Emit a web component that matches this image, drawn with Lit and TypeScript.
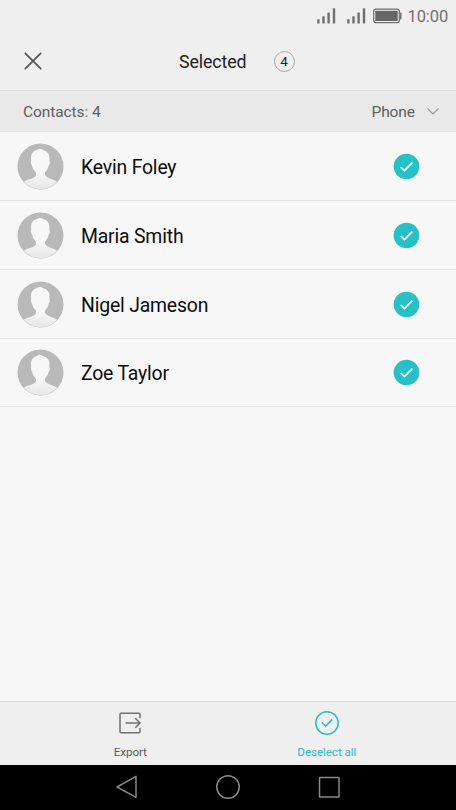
import { LitElement, html, css } from "lit";
import { customElement, property } from "lit/decorators.js";

const signal = () => html`<svg class="signal" width="20" height="18" viewBox="0 0 20 18">
  <g fill="#707070"><rect x="0.2" y="12.2" width="2.4" height="4.3" rx=".6"/><rect x="5.3" y="9.3" width="2.4" height="7.200" rx=".6"/>
  <rect x="10.4" y="5.500" width="2.4" height="11" rx=".6"/><rect x="15.8" y="1.2" width="2.4" height="15.3" rx=".6"/></g></svg>`;

@customElement("contact-row")
export class ContactRow extends LitElement {
  @property() name = "";
  static styles = css`
    :host { display: flex; box-sizing: border-box; height: 69px; align-items: center; padding: 0 36px 0 17px; border-bottom: 1px solid #e4e4e4; }
    :host(:last-child) { height: 68px; }
    .avatar { flex: none; }
    .name { flex: 1; margin-left: 17px; font-size: 19.400px; letter-spacing: -.18px; line-height: 24px; color: #0c0c0c; padding-top: 3px; }
    .check { flex: none; }
  `;
  render() {
    return html`<svg class="avatar" width="47" height="47" viewBox="0 0 47 47">
        <defs>
          <linearGradient id="body" x1="0" y1="0" x2="0" y2="1"><stop offset=".6" stop-color="#f7f7f7"/><stop offset="1" stop-color="#e6e6e6"/></linearGradient>
          <clipPath id="round"><circle cx="23.5" cy="23.5" r="22.600"/></clipPath>
        </defs>
        <circle cx="23.5" cy="23.5" r="23" fill="#b9b9b9"/>
        <path clip-path="url(#round)" fill="url(#body)" d="M22.200 5.800C24 5.800 25.500 6.600 26.500 7.300C30.300 8.300 32.400 11 32.500 14.500L32.400 18.500C33.300 19 32.900 21.500 31.700 22.500C31.200 25.500 30 27.300 28.500 28.700C27.600 30 27.600 31.500 28.600 32.800C30.300 35 36 36.300 41.500 39.500V47H6V39.500C9 36.300 16 36 18.300 33.500C19.300 32 19.200 30 18.400 28.700C16.500 27.300 15.500 25 15 22.500C13.800 21 13.500 19 14.200 17.500C13.500 12.500 14.800 8.300 19.800 7.100Z"/>
      </svg>
      <span class="name">${this.name}</span>
      <svg class="check" width="27" height="27" viewBox="0 0 27 27"><circle cx="13.500" cy="13.500" r="12.800" fill="#27c0c7"/>
        <path d="M7.700 14L11.400 17.500L19.400 9.600" fill="none" stroke="#fff" stroke-width="1.700"/></svg>`;
  }
}

@customElement("app-root")
export class AppRoot extends LitElement {
  names = ["Kevin Foley", "Maria Smith", "Nigel Jameson", "Zoe Taylor"];
  static styles = css`
    :host { display: flex; flex-direction: column; width: 456px; height: 810px; background: #f7f7f7; font-family: Roboto, "Liberation Sans", sans-serif; overflow: hidden; }
    svg { display: block; flex: none; }
    .status { height: 32px; flex: none; display: flex; align-items: center; justify-content: flex-end; background: #efefef; padding-right: 8px; box-sizing: border-box; }
    .signal { margin-right: 10px; }
    .battery { margin-left: -4px; margin-right: 6px; }
    .time { font-size: 16.500px; line-height: 20px; color: #707070; width: 40.500px; white-space: nowrap; letter-spacing: -.1px; padding-top: 1px; }
    .header { height: 59px; flex: none; box-sizing: border-box; display: flex; align-items: center; background: #efefef; border-bottom: 1px solid #dedede; padding: 0 0 0 23px; }
    .title { margin-left: 136px; width: 68px; font-size: 17.800px; letter-spacing: -.12px; line-height: 22px; color: #222; white-space: nowrap; padding-top: 1px; }
    .count { margin-left: 26.500px; width: 21px; height: 21px; box-sizing: border-box; border: 1px solid #aaa; border-radius: 50%; display: flex; align-items: center; justify-content: center; font-size: 13.500px; line-height: 20px; color: #222; }
    .sub { height: 41px; flex: none; box-sizing: border-box; display: flex; align-items: center; justify-content: space-between; background: #e9e9e9; border-bottom: 1px solid #dedede; padding: 2px 16px 0 23px; font-size: 15.500px; letter-spacing: -.08px; line-height: 20px; color: #606060; }
    .source { display: flex; align-items: center; gap: 11px; }
    .list { flex: 1; }
    .actions { height: 63.500px; flex: none; box-sizing: border-box; display: flex; background: #efefef; border-top: 1px solid #dcdcdc; padding: 0 31px 0 32px; }
    .action { flex: 1; display: flex; flex-direction: column; align-items: center; padding-top: 8px; font-size: 11.700px; letter-spacing: -.1px; line-height: 16px; color: #5c5c5c; gap: 8px; }
    .action.on { color: #2fbcc5; }
    .nav { height: 45.500px; flex: none; box-sizing: border-box; padding-bottom: 1px; background: #000; display: flex; align-items: center; justify-content: center; gap: 75px; }
  `;
  render() {
    return html`
      <div class="status">${signal()}${signal()}
        <svg class="battery" width="29" height="16" viewBox="0 0 29 16"><rect x=".7" y="1.200" width="25.600" height="13.400" rx="2" fill="none" stroke="#707070" stroke-width="1.200"/><rect x="2.300" y="2.800" width="22.400" height="10.200" fill="#666"/><rect x="26.800" y="4.500" width="1.700" height="7" rx=".7" fill="#707070"/></svg>
        <span class="time">10:00</span></div>
      <div class="header">
        <svg width="20" height="20" viewBox="0 0 20 20"><path d="M2.300 2.300L17.700 17.700M17.700 2.300L2.300 17.700" stroke="#555" stroke-width="1.700" stroke-linecap="round"/></svg>
        <span class="title">Selected</span><span class="count">4</span></div>
      <div class="sub"><span>Contacts: 4</span><span class="source">Phone
        <svg width="14" height="10" viewBox="0 0 14 10"><path d="M1.500 1.500L7 7L12.500 1.500" fill="none" stroke="#999" stroke-width="1.100"/></svg></span></div>
      <div class="list">${this.names.map((n) => html`<contact-row .name=${n}></contact-row>`)}</div>
      <div class="actions">
        <div class="action"><svg width="26" height="26" viewBox="0 0 26 26"><path d="M23 8.200V4.200Q23 3.200 22 3.200H4Q3 3.200 3 4.200V21.800Q3 22.800 4 22.800H22Q23 22.800 23 21.800V17.800M8.500 13H22.500M18.300 8.300L23 13L18.300 17.700" fill="none" stroke="#707070" stroke-width="1.500"/></svg><span>Export</span></div>
        <div class="action on"><svg width="26" height="26" viewBox="0 0 26 26"><circle cx="13" cy="13" r="11.200" fill="none" stroke="#2fbcc5" stroke-width="1.500"/><path d="M7.800 12.200L11.700 16.200L18.200 9.400" fill="none" stroke="#2fbcc5" stroke-width="1.600"/></svg><span>Deselect all</span></div>
      </div>
      <div class="nav">
        <svg width="26" height="26" viewBox="0 0 26 26"><path d="M22 2.300V23.300L3 13Z" fill="none" stroke="#888" stroke-width="1.500" stroke-linejoin="round"/></svg>
        <svg width="26" height="26" viewBox="0 0 26 26"><circle cx="13" cy="13" r="11.200" fill="none" stroke="#888" stroke-width="1.500"/></svg>
        <svg width="26" height="26" viewBox="0 0 26 26"><rect x="3.500" y="3.500" width="19.500" height="19.500" rx=".6" fill="none" stroke="#888" stroke-width="1.500"/></svg>
      </div>`;
  }
}
